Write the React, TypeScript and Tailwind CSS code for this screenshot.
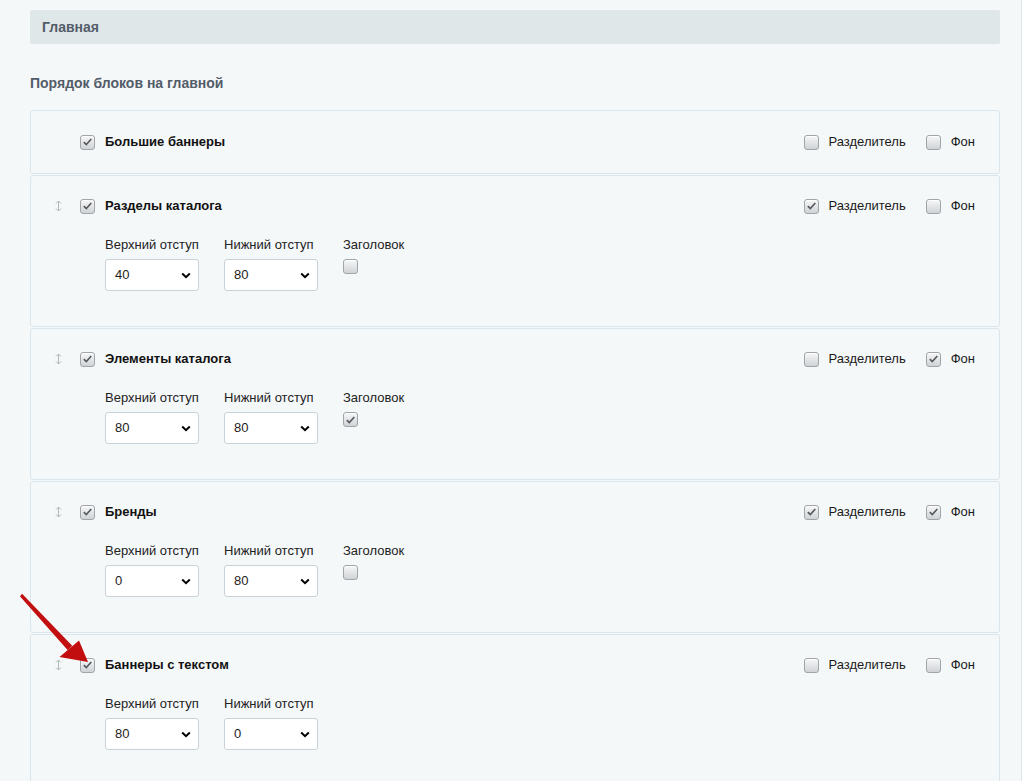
import React from "react";

type Block = {
  title: string;
  enabled: boolean;
  divider: boolean;
  bg: boolean;
  fields?: { top: string; bottom: string; heading?: boolean };
};

const blocks: Block[] = [
  { title: "Большие баннеры", enabled: true, divider: false, bg: false },
  { title: "Разделы каталога", enabled: true, divider: true, bg: false, fields: { top: "40", bottom: "80", heading: false } },
  { title: "Элементы каталога", enabled: true, divider: false, bg: true, fields: { top: "80", bottom: "80", heading: true } },
  { title: "Бренды", enabled: true, divider: true, bg: true, fields: { top: "0", bottom: "80", heading: false } },
  { title: "Баннеры с текстом", enabled: true, divider: false, bg: false, fields: { top: "80", bottom: "0" } },
];

const Check = ({ checked }: { checked: boolean }) => (
  <span className="flex h-[15px] w-[15px] shrink-0 items-center justify-center rounded-[3px] border border-[#a0a5aa] bg-gradient-to-b from-[#f6f7f8] to-[#d0d3d6] shadow-[inset_0_1px_0_#fff]">
    {checked && (
      <svg width="11" height="10" viewBox="0 0 11 10">
        <path d="M1.8 5.2 L4.3 7.6 L9.3 2" fill="none" stroke="#55595d" strokeWidth="1.6" />
      </svg>
    )}
  </span>
);

const Handle = () => (
  <svg width="7" height="12" viewBox="0 0 7 12" className="shrink-0">
    <path d="M3.5 1 L3.5 11" stroke="#b3b8bc" strokeWidth="1" />
    <path d="M1 3.5 L3.5 1 L6 3.5 M1 8.5 L3.5 11 L6 8.5" fill="none" stroke="#b3b8bc" strokeWidth="1" />
  </svg>
);

const Select = ({ value }: { value: string }) => (
  <div className="flex h-[32px] w-[94px] items-center justify-between rounded-[3px] border border-[#c8d2d8] bg-white pl-[9px] pr-[7px] text-[13px] text-[#1d1d1d]">
    <span>{value}</span>
    <svg width="10" height="7" viewBox="0 0 10 7">
      <path d="M1.2 1.5 L5 5.2 L8.8 1.5" fill="none" stroke="#000" strokeWidth="2" />
    </svg>
  </div>
);

const Field = ({ label, value }: { label: string; value: string }) => (
  <div className="flex w-[94px] flex-col">
    <span className="mb-[6px] h-[16px] whitespace-nowrap text-[13px] leading-[16px] text-[#222]">{label}</span>
    <Select value={value} />
  </div>
);

export default function App() {
  return (
    <div
      className="relative min-h-screen overflow-hidden border-r border-[#dfe4e7] bg-[#f5f8f9] pt-[10px] pl-[30px] pr-[21px]"
      style={{ fontFamily: '"Liberation Sans", Arial, sans-serif' }}
    >
      <div className="flex h-[34px] w-[970px] items-center rounded-[2px] bg-[#e0e7e9] px-[12px] text-[14px] font-bold text-[#535c69]">
        Главная
      </div>

      <div className="mt-[31px] mb-[19px] h-[16px] text-[14px] font-bold leading-[16px] text-[#535c69]">
        Порядок блоков на главной
      </div>

      <div className="flex w-[970px] flex-col gap-[1px]">
        {blocks.map((b, i) => (
          <div key={b.title} className={`rounded-[3px] border border-[#dbe6ec] pr-[24px] ${b.fields ? "pt-[20px] pb-[35px]" : "pt-[21px] pb-[21px]"}`}>
            <div className="flex h-[20px] items-center">
              <div className="flex w-[49px] justify-end pr-[18px]">{i > 0 && <Handle />}</div>
              <Check checked={b.enabled} />
              <span className="ml-[10px] text-[13px] font-bold text-[#111]">{b.title}</span>
              <div className="ml-auto flex items-center">
                <Check checked={b.divider} />
                <span className="ml-[10px] text-[13px] text-[#1a1a1a]">Разделитель</span>
                <div className="ml-[20px]">
                  <Check checked={b.bg} />
                </div>
                <span className="ml-[10px] text-[13px] text-[#1a1a1a]">Фон</span>
              </div>
            </div>
            {b.fields && (
              <div className="mt-[21px] flex gap-[25px] pl-[74px]">
                <Field label="Верхний отступ" value={b.fields.top} />
                <Field label="Нижний отступ" value={b.fields.bottom} />
                {b.fields.heading !== undefined && (
                  <div className="flex flex-col">
                    <span className="mb-[6px] h-[16px] text-[13px] leading-[16px] text-[#222]">Заголовок</span>
                    <Check checked={b.fields.heading} />
                  </div>
                )}
              </div>
            )}
          </div>
        ))}
      </div>

      <svg className="pointer-events-none absolute left-0 top-0" width="120" height="700" viewBox="0 0 120 700">
        <polygon points="19.9,596.2 22.1,593.8 72.2,645.8 67.8,650.2" fill="#c20e0e" />
        <polygon points="59.5,657 79,640.5 88,662" fill="#c20e0e" />
      </svg>
    </div>
  );
}
